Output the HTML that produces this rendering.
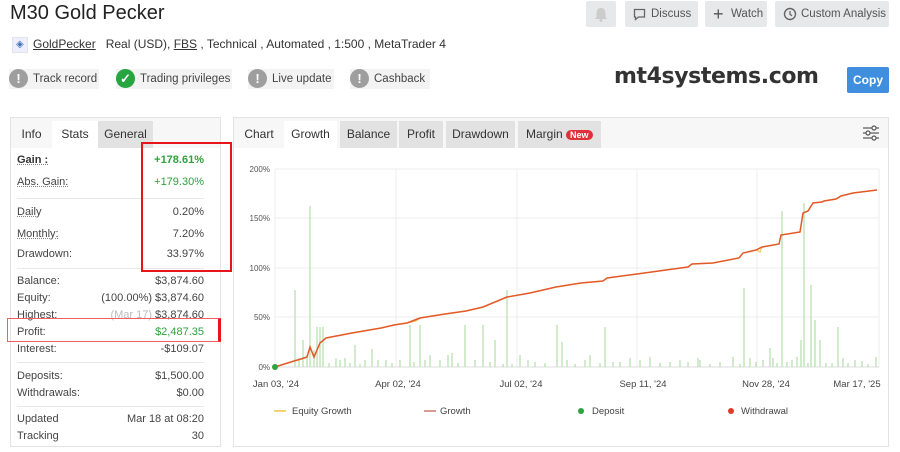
<!DOCTYPE html>
<html><head><meta charset="utf-8"><style>
*{box-sizing:border-box;margin:0;padding:0}
body{width:900px;height:452px;background:#fff;font-family:"Liberation Sans",sans-serif;color:#333;position:relative;overflow:hidden}
.a{position:absolute}
h1{position:absolute;left:10px;top:2px;font-size:20px;font-weight:normal;color:#222}
.btn{position:absolute;top:1px;height:26px;background:#e7e8ea;border-radius:2px;font-size:11.5px;color:#555;line-height:26px;padding-left:26px;white-space:nowrap}
.badge{position:absolute;top:69px;height:20px;background:#f3f3f3;font-size:11.5px;line-height:20px;color:#444;padding-left:24px;padding-right:8px;white-space:nowrap}
.badge i{position:absolute;left:0;top:0;width:19px;height:19px;border-radius:50%;background:#9e9e9e;color:#fff;font-style:normal;font-weight:bold;text-align:center;line-height:19px;font-size:13px}
.panel{position:absolute;border:1px solid #e3e3e3;background:#fff}
.tabs{position:absolute;left:0;top:0;right:0;height:30px;background:#f7f7f7}
.tab{position:absolute;top:3px;height:27px;line-height:27px;font-size:12px;color:#333;text-align:center;background:#e2e2e2;white-space:nowrap}
.row{position:absolute;left:6px;right:16px;font-size:11px;color:#444;height:14px}
.row span{position:absolute;right:0}
.u{text-decoration:underline dotted #888}
.sep{position:absolute;left:6px;right:16px;height:1px;background:#e8e8e8}
.g{color:#2ea23c}
</style></head><body>
<h1>M30 Gold Pecker</h1>
<div class="btn" style="left:586px;width:30px;padding:0"><svg width="30" height="26"><path d="M15 7c-3 0-4.5 2.3-4.5 5v4l-1.5 2h12l-1.5-2v-4c0-2.7-1.5-5-4.5-5z" fill="#ccc"/><circle cx="15" cy="19.5" r="1.5" fill="#ccc"/></svg></div>
<div class="btn" style="left:625px;width:73px"><svg class="a" style="left:8px;top:7px" width="13" height="13"><path d="M1.5 1.5h10v7.5h-6l-3 2.5v-2.5h-1z" fill="none" stroke="#666" stroke-width="1.3"/></svg>Discuss</div>
<div class="btn" style="left:705px;width:62px"><span class="a" style="left:8px;top:0;font-size:18px;color:#555">+</span>Watch</div>
<div class="btn" style="left:775px;width:114px"><svg class="a" style="left:8px;top:6px" width="14" height="14"><circle cx="7" cy="7" r="5.5" fill="none" stroke="#666" stroke-width="1.4"/><path d="M7 4v3.3l2 1.5" fill="none" stroke="#666" stroke-width="1.3"/></svg>Custom Analysis</div>

<div class="a" style="left:12px;top:37px;width:16px;height:16px;background:#eef;border:1px solid #e4e4ec"><span class="a" style="left:3px;top:1px;font-size:10px;color:#3b6fb5">◈</span></div>
<div class="a" style="left:33px;top:37px;font-size:12px;color:#333"><span style="text-decoration:underline">GoldPecker</span>&nbsp;&nbsp; Real (USD), <span style="text-decoration:underline">FBS</span> , Technical , Automated , 1:500 , MetaTrader 4</div>

<div class="badge" style="left:9px;width:90px"><i>!</i>Track record</div>
<div class="badge" style="left:116px;width:116px"><i style="background:#27a540">✓</i>Trading privileges</div>
<div class="badge" style="left:248px;width:86px"><i>!</i>Live update</div>
<div class="badge" style="left:350px;width:80px"><i>!</i>Cashback</div>
<div class="a" style="left:614px;top:64px;font-size:22px;font-weight:bold;color:#333;font-family:'DejaVu Sans','Liberation Sans',sans-serif;letter-spacing:-0.4px">mt4systems.com</div>
<div class="a" style="left:847px;top:67px;width:42px;height:26px;background:#3f8fde;color:#fff;font-size:12px;font-weight:bold;text-align:center;line-height:26px;border-radius:2px">Copy</div>

<div class="panel" style="left:10px;top:117px;width:211px;height:330px">
<div class="tabs"><div class="tab" style="left:0;width:41px;background:none">Info</div><div class="tab" style="left:41px;width:46px;background:#fff">Stats</div><div class="tab" style="left:87px;width:55px">General</div></div>
<div class="row" style="top:36px;font-weight:bold;color:#333"><b class="u">Gain :</b><span class="g">+178.61%</span></div>
<div class="row" style="top:58px"><span class="u" style="position:static">Abs. Gain:</span><span class="g">+179.30%</span></div>
<div class="sep" style="top:80px"></div>
<div class="row" style="top:88px"><span class="u" style="position:static">Daily</span><span>0.20%</span></div>
<div class="row" style="top:110px"><span class="u" style="position:static">Monthly:</span><span>7.20%</span></div>
<div class="row" style="top:130px">Drawdown:<span>33.97%</span></div>
<div class="sep" style="top:150px"></div>
<div class="row" style="top:157px">Balance:<span>$3,874.60</span></div>
<div class="row" style="top:174px">Equity:<span>(100.00%) $3,874.60</span></div>
<div class="row" style="top:191px">Highest:<span><span style="position:static;color:#bbb">(Mar 17)</span> $3,874.60</span></div>
<div class="row" style="top:208px">Profit:<span class="g">$2,487.35</span></div>
<div class="row" style="top:225px">Interest:<span>-$109.07</span></div>
<div class="sep" style="top:244px"></div>
<div class="row" style="top:252px">Deposits:<span>$1,500.00</span></div>
<div class="row" style="top:269px">Withdrawals:<span>$0.00</span></div>
<div class="sep" style="top:288px"></div>
<div class="row" style="top:295px">Updated<span>Mar 18 at 08:20</span></div>
<div class="row" style="top:312px">Tracking<span>30</span></div>
</div>
<div class="a" style="left:141px;top:142px;width:91px;height:130px;border:2px solid #e8141b"></div>
<div class="a" style="left:7px;top:318px;width:214px;height:24px;border:1px solid #f06060;border-right:3px solid #e8141b"></div>

<div class="panel" style="left:233px;top:117px;width:656px;height:330px">
<div class="tabs"><div class="tab" style="left:0;width:50px;background:none">Chart</div><div class="tab" style="left:50px;width:53px;background:#fff">Growth</div><div class="tab" style="left:106px;width:57px">Balance</div><div class="tab" style="left:165px;width:44px">Profit</div><div class="tab" style="left:212px;width:69px">Drawdown</div><div class="tab" style="left:284px;width:83px;text-align:left;padding-left:8px">Margin <span style="background:#e0303a;color:#fff;font-size:9px;border-radius:7px;padding:0 4px;font-weight:bold">New</span></div>
<svg class="a" style="left:628px;top:7px" width="18" height="16"><g stroke="#555" stroke-width="1.2" fill="#fff"><line x1="1" y1="3" x2="17" y2="3"/><line x1="1" y1="8" x2="17" y2="8"/><line x1="1" y1="13" x2="17" y2="13"/><circle cx="12" cy="3" r="2"/><circle cx="6" cy="8" r="2"/><circle cx="12" cy="13" r="2"/></g></svg></div>
</div>

<svg class="a" style="left:0;top:0" width="900" height="452" font-family="Liberation Sans,sans-serif">
<g stroke="#ececec" stroke-width="1">
<line x1="275" y1="169" x2="879" y2="169"/><line x1="275" y1="218" x2="879" y2="218"/><line x1="275" y1="268" x2="879" y2="268"/><line x1="275" y1="317" x2="879" y2="317"/>
<line x1="396" y1="169" x2="396" y2="367"/><line x1="517" y1="169" x2="517" y2="367"/><line x1="637" y1="169" x2="637" y2="367"/><line x1="757" y1="169" x2="757" y2="367"/><line x1="275" y1="169" x2="275" y2="367"/><line x1="879" y1="169" x2="879" y2="367"/>
</g>
<line x1="275" y1="367" x2="879" y2="367" stroke="#ddd"/>
<g fill="#555" font-size="8" text-anchor="end"><text x="270" y="172">200%</text><text x="270" y="221">150%</text><text x="270" y="271">100%</text><text x="270" y="320">50%</text><text x="270" y="370">0%</text></g>
<g fill="#444" font-size="9.5" text-anchor="middle"><text x="276" y="387">Jan 03, '24</text><text x="398" y="387">Apr 02, '24</text><text x="521" y="387">Jul 02, '24</text><text x="643" y="387">Sep 11, '24</text><text x="766" y="387">Nov 28, '24</text><text x="857" y="387">Mar 17, '25</text></g>
<g stroke="#b9e0b0" stroke-width="1.3">
<path d="M295 367V290M299 367V358M303 367V340M307 367V355M310 367V206M314 367V350M317 367V327M320 367V327M323 367V327M329 367V363M336 367V358M340 367V360M345 367V358M350 367V363M355 367V345M360 367V364M365 367V360M372 367V349M378 367V360M386 367V360M392 367V363M400 367V360M410 367V325M414 367V362M420 367V325M425 367V360M430 367V355M440 367V360M448 367V355M452 367V353M458 367V363M465 367V325M475 367V360M483 367V325M490 367V362M495 367V340M503 367V364M507 367V290M512 367V364M520 367V355M528 367V360M535 367V362M545 367V363M557 367V325M562 367V342M567 367V360M575 367V364M585 367V360M590 367V355M600 367V363M605 367V327M613 367V362M620 367V362M630 367V358M640 367V360M650 367V357M660 367V363M670 367V362M680 367V360M688 367V362M698 367V358M700 367V360M710 367V364M720 367V362M733 367V357M740 367V364M744 367V288M750 367V358M756 367V362M763 367V360M770 367V348M773 367V358M777 367V363M782 367V211M787 367V362M792 367V360M797 367V357M801 367V340M804 367V203M808 367V363M811 367V285M815 367V320M820 367V340M826 367V363M832 367V363M838 367V327M843 367V358M848 367V363M855 367V360M862 367V361M868 367V364M876 367V357"/>
</g>
<polyline fill="none" stroke="#f3c55a" stroke-width="1.2" points="275,367 294,361 301,359 307,357 310,347 314,357 320,343 326,338 352,333 381,328 394,325 407,323 416,321 420,318 445,314 466,311 483,307 507,297 530,293 556,287 581,283 603,281 607,278 637,274 666,270 688,267 692,264 713,263 739,258 743,253 756,250 760,252 762,247 779,244 781,235 800,232 803,213 808,211 813,203 822,202 824,201 836,199 841,196 853,193 877,190"/>
<polyline fill="none" stroke="#e35a2a" stroke-width="1.5" points="275,367 294,361 301,359 307,357 310,347 314,357 320,343 326,338 352,333 381,328 394,325 407,323 420,318 445,314 466,311 483,307 507,297 530,293 556,287 581,283 603,281 607,278 637,274 666,270 688,267 692,264 713,263 739,258 743,253 756,250 762,247 779,244 781,235 800,232 803,213 808,211 813,203 822,202 824,201 836,199 841,196 853,193 877,190"/>
<circle cx="275" cy="367" r="3" fill="#2ea23c"/>
<line x1="274" y1="411" x2="286" y2="411" stroke="#f3d27a" stroke-width="2"/><text x="292" y="414" font-size="9.5" fill="#444">Equity Growth</text>
<line x1="424" y1="411" x2="436" y2="411" stroke="#d99a94" stroke-width="2"/><text x="440" y="414" font-size="9.5" fill="#444">Growth</text>
<circle cx="581" cy="411" r="3" fill="#2ea23c"/><text x="592" y="414" font-size="9.5" fill="#444">Deposit</text>
<circle cx="731" cy="411" r="3" fill="#e03a2e"/><text x="741" y="414" font-size="9.5" fill="#444">Withdrawal</text>
</svg>
</body></html>
